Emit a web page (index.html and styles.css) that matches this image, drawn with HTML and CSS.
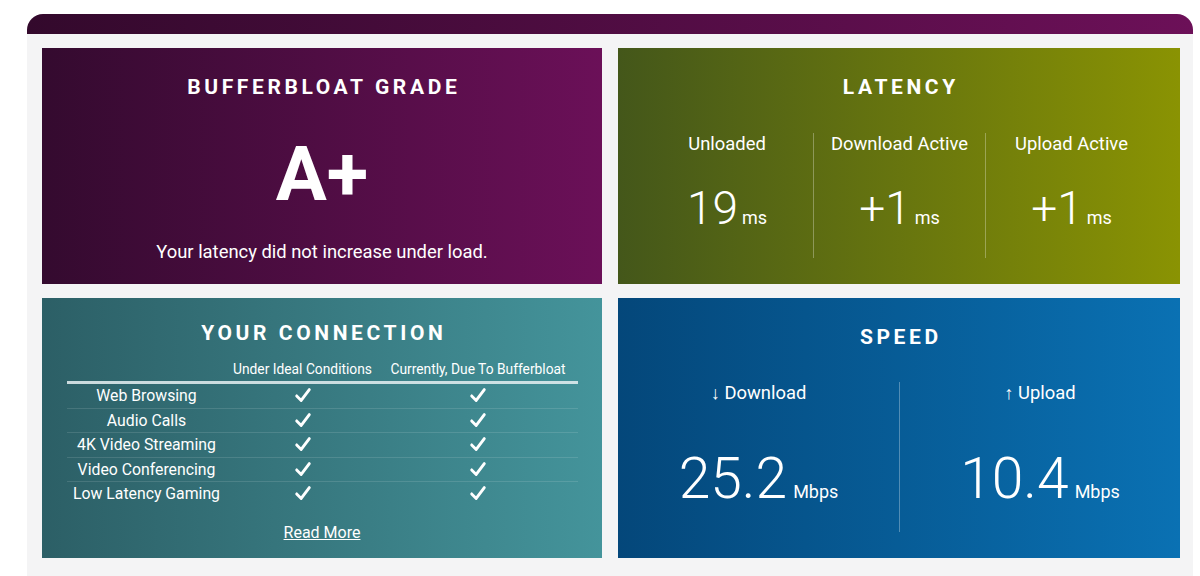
FILE: index.html
```html
<!DOCTYPE html>
<html lang="en">
<head>
<meta charset="utf-8">
<title>Bufferbloat Results</title>
<link rel="stylesheet" href="styles.css">
</head>
<body>
<div class="wrap">
  <div class="topbar"></div>
  <div class="panel">
    <div class="grid">
      <section class="card card-grade">
        <h2 class="card-title">BUFFERBLOAT GRADE</h2>
        <div class="grade">A+</div>
        <p class="grade-note">Your latency did not increase under load.</p>
      </section>

      <section class="card card-latency">
        <h2 class="card-title">LATENCY</h2>
        <div class="stats stats-3">
          <div class="stat">
            <div class="stat-label">Unloaded</div>
            <div class="stat-value"><span class="num">19</span><span class="unit">ms</span></div>
          </div>
          <div class="stat">
            <div class="stat-label">Download Active</div>
            <div class="stat-value"><span class="num">+1</span><span class="unit">ms</span></div>
          </div>
          <div class="stat">
            <div class="stat-label">Upload Active</div>
            <div class="stat-value"><span class="num">+1</span><span class="unit">ms</span></div>
          </div>
        </div>
      </section>

      <section class="card card-conn">
        <h2 class="card-title">YOUR CONNECTION</h2>
        <table class="conn-table">
          <thead>
            <tr><th></th><th>Under Ideal Conditions</th><th>Currently, Due To Bufferbloat</th></tr>
          </thead>
          <tbody>
            <tr><td>Web Browsing</td><td><svg class="chk" viewBox="0 0 20 20"><path d="M3 11 L8 16 L17 4"/></svg></td><td><svg class="chk" viewBox="0 0 20 20"><path d="M3 11 L8 16 L17 4"/></svg></td></tr>
            <tr><td>Audio Calls</td><td><svg class="chk" viewBox="0 0 20 20"><path d="M3 11 L8 16 L17 4"/></svg></td><td><svg class="chk" viewBox="0 0 20 20"><path d="M3 11 L8 16 L17 4"/></svg></td></tr>
            <tr><td>4K Video Streaming</td><td><svg class="chk" viewBox="0 0 20 20"><path d="M3 11 L8 16 L17 4"/></svg></td><td><svg class="chk" viewBox="0 0 20 20"><path d="M3 11 L8 16 L17 4"/></svg></td></tr>
            <tr><td>Video Conferencing</td><td><svg class="chk" viewBox="0 0 20 20"><path d="M3 11 L8 16 L17 4"/></svg></td><td><svg class="chk" viewBox="0 0 20 20"><path d="M3 11 L8 16 L17 4"/></svg></td></tr>
            <tr><td>Low Latency Gaming</td><td><svg class="chk" viewBox="0 0 20 20"><path d="M3 11 L8 16 L17 4"/></svg></td><td><svg class="chk" viewBox="0 0 20 20"><path d="M3 11 L8 16 L17 4"/></svg></td></tr>
          </tbody>
        </table>
        <a class="read-more" href="#">Read More</a>
      </section>

      <section class="card card-speed">
        <h2 class="card-title">SPEED</h2>
        <div class="stats stats-2">
          <div class="stat">
            <div class="stat-label">↓ Download</div>
            <div class="stat-value big"><span class="num">25.2</span><span class="unit">Mbps</span></div>
          </div>
          <div class="stat">
            <div class="stat-label">↑ Upload</div>
            <div class="stat-value big"><span class="num">10.4</span><span class="unit">Mbps</span></div>
          </div>
        </div>
      </section>
    </div>
  </div>
</div>
</body>
</html>
```

FILE: styles.css
```css
html, body {
  margin: 0;
  padding: 0;
  background: #ffffff;
}
body {
  font-family: Roboto, "Open Sans", sans-serif;
  color: #ffffff;
}
.wrap {
  margin: 14px 0 0 27px;
  width: 1166px;
}
.topbar {
  height: 20px;
  border-radius: 16px 16px 0 0;
  background: linear-gradient(to right, #33092c, #6c1058);
}
.panel {
  background: #f4f4f5;
  padding: 14px 13px 20px 15px;
}
.grid {
  display: grid;
  grid-template-columns: 560px 562px;
  grid-template-rows: 236px 260px;
  column-gap: 16px;
  row-gap: 14px;
}
.card {
  display: flex;
  flex-direction: column;
  align-items: center;
  box-sizing: border-box;
  padding-top: 28px;
}
.card-grade { background: linear-gradient(to right, #340a2f, #6b1058); }
.card-latency { background: linear-gradient(to right, #44571a, #8a9303); }
.card-conn { background: linear-gradient(to right, #2c5f66, #44949b); padding-top: 24px; }
.card-speed { background: linear-gradient(to right, #04477a, #0a71b3); }

.card-title {
  margin: 0;
  font-size: 21px;
  line-height: 22px;
  font-weight: 700;
  letter-spacing: 3.6px;
  text-indent: 3.6px;
}
.grade {
  margin-top: 36px;
  font-size: 76px;
  line-height: 80px;
  font-weight: 700;
}
.grade-note {
  margin: 27px 0 0;
  font-size: 18.4px;
  line-height: 22px;
}

.stats {
  display: grid;
  align-self: stretch;
  margin: 35px 23px 0;
}
.stats-3 { grid-template-columns: repeat(3, 1fr); height: 125px; }
.stats-2 { grid-template-columns: repeat(2, 1fr); height: 150px; margin: 34px 0 0; }
.stat {
  display: flex;
  flex-direction: column;
  align-items: center;
}
.stat + .stat {
  border-left: 1px solid rgba(255, 255, 255, 0.3);
}
.stat-label {
  font-size: 18.4px;
  line-height: 22px;
  margin-top: 0;
}
.stat-value {
  margin-top: 25px;
  display: flex;
  align-items: baseline;
}
.stat-value .num {
  font-size: 46px;
  font-weight: 300;
  line-height: 56px;
}
.stat-value .unit {
  font-size: 18px;
  margin-left: 4px;
}
.stat-value.big { margin-top: 43px; }
.stat-value.big .num {
  font-size: 57px;
  line-height: 64px;
}
.stat-value.big .unit { margin-left: 6px; }

.conn-table {
  margin-top: 16px;
  width: 511px;
  border-collapse: collapse;
  table-layout: fixed;
}
.conn-table th:nth-child(1), .conn-table td:nth-child(1) { width: 160px; }
.conn-table th:nth-child(2), .conn-table td:nth-child(2) { width: 152px; }
.conn-table th {
  font-size: 13.8px;
  font-weight: 400;
  line-height: 18px;
  padding: 0 0 3px;
  border-bottom: 3px solid rgba(230, 240, 242, 0.85);
  white-space: nowrap;
}
.conn-table td {
  text-align: center;
  font-size: 15.8px;
  line-height: 23.5px;
  padding: 0;
  border-bottom: 1px solid rgba(255, 255, 255, 0.12);
}
.conn-table tr:last-child td { border-bottom: none; }
.chk {
  width: 18px;
  height: 18px;
  vertical-align: -3px;
  fill: none;
  stroke: #ffffff;
  stroke-width: 3.2;
  stroke-linecap: round;
  stroke-linejoin: round;
}
.read-more {
  margin-top: 16px;
  color: #ffffff;
  font-size: 16px;
  line-height: 22px;
  text-decoration: underline;
}
```
